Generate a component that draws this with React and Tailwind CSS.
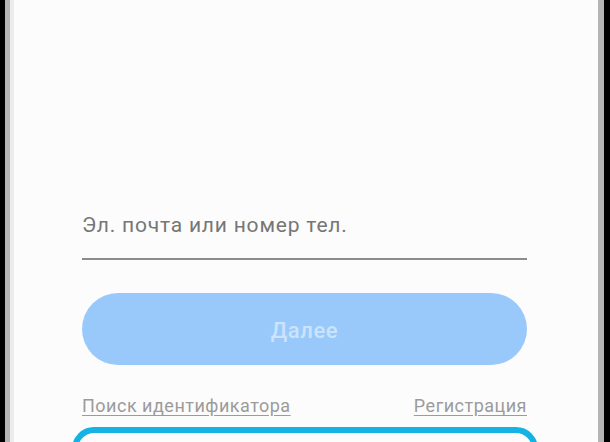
import React from 'react';

const App = () => {
  return (
    <div className="w-[610px] h-[442px] overflow-hidden bg-black pl-[5px] pr-[6px]" style={{ fontFamily: 'Roboto, "Noto Sans", sans-serif' }}>
      <div className="h-full bg-[#b5b5b5] pl-[5px] pr-[6px]">
        <div className="h-full bg-[#fcfcfc] border-l-4 border-[#ececec] pl-[68px] pr-[71px] pt-[211px]">
          <div className="border-b-2 border-[#8c8c8c] pb-[18px]">
            <div className="text-[21px] leading-[29px] tracking-[0.8px] text-[#767676]">Эл. почта или номер тел.</div>
          </div>

          <button className="mt-[33px] w-full h-[72px] rounded-full bg-[#99c9fa] pt-[3px] text-[22px] font-medium tracking-[0.6px] text-[#cbe3fc]">
            Далее
          </button>

          <div className="mt-[29px] flex justify-between text-[18px] leading-[24px] tracking-[0.5px] text-[#9b9b9b]">
            <span className="underline underline-offset-[3px]">Поиск идентификатора</span>
            <span className="underline underline-offset-[3px]">Регистрация</span>
          </div>

          <div className="mt-[9px] -ml-[10px] -mr-[11px] h-[100px] rounded-[22px] border-[6px] border-[#14b3e4]" />
        </div>
      </div>
    </div>
  );
};

export default App;
